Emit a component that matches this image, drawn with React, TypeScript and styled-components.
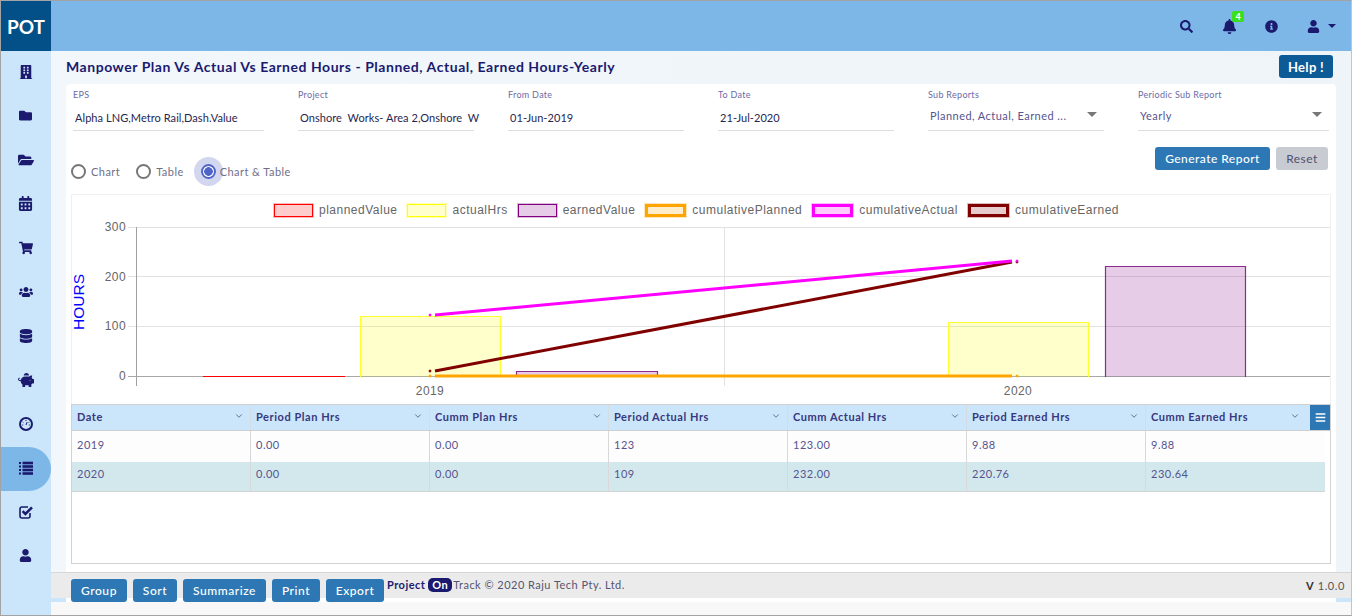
import React from 'react';
import styled, { createGlobalStyle } from 'styled-components';
import {
  FaBars,
  FaBell,
  FaBuilding,
  FaCalendarAlt,
  FaDatabase,
  FaFolder,
  FaFolderOpen,
  FaInfoCircle,
  FaPiggyBank,
  FaSearch,
  FaShoppingCart,
  FaUser,
  FaUsers,
} from 'react-icons/fa';
import { FiChevronDown } from 'react-icons/fi';

const NAVY = '#1b1a6e';
const SKY = '#7cb7e8';
const PALE = '#cbe6fa';
const BTN = '#2d78b4';

const GlobalStyle = createGlobalStyle`
  html, body { margin: 0; padding: 0; background: #fff; }
  body { font-family: Lato, "Liberation Sans", sans-serif; }
  * { box-sizing: border-box; }
`;

const Frame = styled.div`
  width: 1352px;
  height: 616px;
  display: flex;
  border: 1px solid #a3a3a3;
  border-right-color: #c4c4c4;
  overflow: hidden;
`;

const Sidebar = styled.nav`
  width: 50px;
  flex: none;
  background: ${PALE};
`;

const Brand = styled.div`
  height: 50px;
  background: #034f87;
  color: #fff;
  font-size: 19px;
  font-weight: 700;
  display: flex;
  align-items: center;
  justify-content: center;
`;

const NavItem = styled.div<{ $active?: boolean }>`
  height: 44px;
  display: flex;
  align-items: center;
  justify-content: center;
  padding: 0 1px 3px 0;
  color: ${NAVY};
  border-radius: 0 22px 22px 0;
  background: ${(p) => (p.$active ? SKY : 'transparent')};
`;

const Main = styled.div`
  flex: 1;
  min-width: 0;
  display: flex;
  flex-direction: column;
`;

const TopBar = styled.header`
  height: 50px;
  flex: none;
  background: ${SKY};
  display: flex;
  align-items: center;
  justify-content: flex-end;
  color: ${NAVY};
  padding-right: 15px;
`;

const TopIcon = styled.span<{ $gap: number }>`
  position: relative;
  display: flex;
  align-items: center;
  margin-left: ${(p) => p.$gap}px;
`;

const Badge = styled.span`
  position: absolute;
  top: -8px;
  left: 10px;
  width: 12px;
  height: 11px;
  background: #3be01c;
  color: #fff;
  border-radius: 2px;
  font-size: 9px;
  font-weight: 700;
  line-height: 11px;
  text-align: center;
`;

const Caret = styled.span`
  display: inline-block;
  width: 0;
  height: 0;
  margin-left: 8px;
  border-left: 4px solid transparent;
  border-right: 4px solid transparent;
  border-top: 4px solid ${NAVY};
`;

const Content = styled.div`
  height: 521px;
  flex: none;
  background: linear-gradient(90deg, #f1f7fb, #eef4f7);
  padding: 4px 15px 0;
  display: flex;
  flex-direction: column;
`;

const TitleRow = styled.div`
  height: 29px;
  flex: none;
  display: flex;
  justify-content: space-between;
  align-items: flex-start;
`;

const Title = styled.h1`
  margin: 4px 0 0;
  font-size: 14px;
  line-height: 16px;
  font-weight: 700;
  letter-spacing: 0.535px;
  color: ${NAVY};
`;

const HelpButton = styled.button`
  width: 54px;
  height: 23px;
  margin-right: 3px;
  border: 0;
  border-radius: 3px;
  background: #0c5a96;
  color: #fff;
  font: 700 13px Lato, sans-serif;
  letter-spacing: 0.3px;
  padding: 0;
`;

const Card = styled.section`
  flex: 1;
  min-height: 0;
  background: #fff;
  border-radius: 4px 4px 0 0;
  padding: 0 5px;
  display: flex;
  flex-direction: column;
`;

const Fields = styled.div`
  display: flex;
  height: 47px;
  margin-left: 2px;
  flex: none;
`;

const Field = styled.div<{ $w: number; $gap: number }>`
  width: ${(p) => p.$w}px;
  margin-right: ${(p) => p.$gap}px;
  flex: none;
  border-bottom: 1px solid #ddd;
  position: relative;
`;

const FieldLabel = styled.div`
  font-size: 9px;
  line-height: 11px;
  padding-top: 5px;
  letter-spacing: 0.3px;
  color: #6c6ba6;
`;

const FieldValue = styled.div<{ $select?: boolean }>`
  margin-top: ${(p) => (p.$select ? 9 : 11)}px;
  padding-left: 2px;
  font-size: 11px;
  line-height: 14px;
  letter-spacing: ${(p) => (p.$select ? 0.45 : 0.06)}px;
  color: ${(p) => (p.$select ? '#55548f' : '#27264f')};
  white-space: pre;
`;

const SelectCaret = styled.span`
  position: absolute;
  top: 28px;
  right: 7px;
  width: 0;
  height: 0;
  border-left: 5px solid transparent;
  border-right: 5px solid transparent;
  border-top: 5px solid #777;
`;

const ActionRow = styled.div`
  height: 63px;
  flex: none;
  display: flex;
  justify-content: space-between;
  align-items: flex-start;
`;

const Radios = styled.div`
  display: flex;
  align-items: center;
  height: 30px;
  margin-top: 25px;
`;

const Radio = styled.label<{ $gap: number }>`
  display: flex;
  align-items: center;
  font-size: 11px;
  letter-spacing: 0.45px;
  color: #6f6f8a;
  margin-right: ${(p) => p.$gap}px;
`;

const RadioMark = styled.span<{ $on?: boolean }>`
  width: 15px;
  height: 15px;
  margin-right: ${(p) => (p.$on ? 4 : 5)}px;
  border-radius: 50%;
  flex: none;
  border: 2px solid ${(p) => (p.$on ? '#4f63c9' : '#777')};
  background: ${(p) =>
    p.$on ? 'radial-gradient(circle, #4f63c9 0 4px, #fff 4.6px)' : '#fff'};
  box-shadow: ${(p) => (p.$on ? '0 0 0 7px #d2d6ef' : 'none')};
`;

const Actions = styled.div`
  display: flex;
  gap: 6px;
  margin: 16px 3px 0 0;
`;

const Btn = styled.button<{ $w: number; $muted?: boolean }>`
  width: ${(p) => p.$w}px;
  height: 23px;
  padding: 0;
  border: 0;
  border-radius: 3px;
  background: ${(p) => (p.$muted ? '#c8ccd2' : BTN)};
  color: ${(p) => (p.$muted ? '#50506e' : '#fff')};
  font: ${(p) => (p.$muted ? 400 : 500)} 12px Lato, sans-serif;
  letter-spacing: 0.45px;
  flex: none;
`;

const ChartBox = styled.div`
  height: 210px;
  flex: none;
  border: 1px solid #f0f0f0;
  border-bottom: 0;
`;

const Legend = styled.div`
  height: 25px;
  display: flex;
  align-items: flex-start;
  justify-content: center;
  padding: 8px 9px 0 0;
  gap: 10px;
  font: 12px/14px "Liberation Sans", Arial, sans-serif;
  letter-spacing: 0.5px;
  color: #666;
`;

const LegendItem = styled.div`
  display: flex;
  align-items: center;
  gap: 6px;
`;

const Swatch = styled.span<{ $fill: string; $line: string; $bold?: boolean }>`
  width: ${(p) => (p.$bold ? 41 : 39)}px;
  height: 13px;
  background: ${(p) => p.$fill};
  border: ${(p) => (p.$bold ? 3 : 1)}px solid ${(p) => p.$line};
  box-shadow: 0 0 0 1px ${(p) => p.$line}44;
`;

const Plot = styled.svg`
  display: block;
  width: 1258px;
  height: 183px;
  overflow: visible;
`;

const Grid = styled.div`
  height: 160px;
  flex: none;
  border: 1px solid #d2d2d2;
  position: relative;
`;

const HeadRow = styled.div`
  display: grid;
  grid-template-columns: repeat(7, 179px);
  height: 26px;
  background: ${PALE};
  border-bottom: 1px solid #d0d0d0;
  color: #38377f;
  font-size: 11px;
  font-weight: 700;
  letter-spacing: 0.55px;
`;

const HeadCell = styled.div`
  position: relative;
  display: flex;
  align-items: center;
  padding: 0 0 2px 5px;
  border-right: 1px solid #d4dde4;

  &:last-child {
    border-right: 0;
  }

  svg {
    position: absolute;
    top: 6px;
    right: 6px;
    font-size: 10px;
    color: #55548f;
  }
`;

const LastHeadCell = styled(HeadCell)`
  svg {
    right: 25px;
  }
`;

const MenuButton = styled.span`
  position: absolute;
  top: 0;
  right: 0;
  width: 20px;
  height: 25px;
  background: ${BTN};
  color: #fff;
  display: flex;
  align-items: center;
  justify-content: center;
  font-size: 11px;
`;

const BodyRow = styled.div<{ $alt?: boolean }>`
  display: grid;
  grid-template-columns: repeat(7, 179px);
  width: 1253px;
  height: ${(p) => (p.$alt ? 30 : 31)}px;
  background: ${(p) => (p.$alt ? '#d3e8ed' : '#fdfdfd')};
  border-bottom: ${(p) => (p.$alt ? '1px solid #cfd6d8' : '0')};
  color: #55548f;
  font-size: 11px;
  letter-spacing: 0.5px;
`;

const BodyCell = styled.div<{ $alt?: boolean }>`
  padding: ${(p) => (p.$alt ? 5 : 7)}px 0 0 5px;
  border-right: 1px solid #d8d8d8;

  &:last-child {
    border-right: 0;
  }
`;

const Footer = styled.footer`
  height: 26px;
  flex: none;
  position: relative;
  z-index: 1;
  background: #ebebeb;
  border-top: 1px solid #d6d6d6;
  display: flex;
  align-items: flex-start;
  padding: 6px 6px 0 20px;
`;

const FootButtons = styled.div`
  display: flex;
  gap: 6px;
`;

const FootButton = styled(Btn)`
  font-weight: 500;
  letter-spacing: 0.55px;
`;

const Copy = styled.div`
  margin: -1px 0 0 3px;
  font-size: 11px;
  line-height: 14px;
  letter-spacing: 0.47px;
  color: #55556f;
  display: flex;
  align-items: center;
  white-space: nowrap;
`;

const CopyBrand = styled.b`
  color: ${NAVY};
`;

const OnPill = styled.b`
  background: ${NAVY};
  color: #fff;
  border-radius: 5px;
  padding: 0 4px;
  margin: 0 1px 0 3px;
  line-height: 14px;
`;

const Version = styled.div`
  margin-left: auto;
  font-size: 11px;
  letter-spacing: 0.6px;
  color: #555;

  b {
    color: #333;
  }
`;

const Gutter = styled.div`
  height: 4px;
  flex: none;
  background: ${PALE};
  padding: 0 15px;

  &::before {
    content: '';
    display: block;
    height: 4px;
    background: #fff;
  }
`;

const Strip = styled.div`
  flex: 1;
  background: #f8f8f8;
`;

function GaugeIcon({ size }: { size: number }) {
  return (
    <svg width={size} height={size} viewBox="0 0 14 14" fill="none">
      <circle cx="7" cy="7" r="6" stroke="currentColor" strokeWidth="2" />
      <path
        d="M7 3v1M3.6 5l.8.5M10.4 5l-.8.5M3.2 8h1M9.8 8h1M7 8l1.2-3"
        stroke="currentColor"
        strokeWidth="1"
      />
    </svg>
  );
}

function ListIcon({ size }: { size: number }) {
  return (
    <svg width={size} height={size} viewBox="0 0 14 14" fill="currentColor">
      {[1, 4.5, 8, 11.5].map((y) => (
        <g key={y}>
          <rect x="0" y={y} width="2" height="2" />
          <rect x="3.5" y={y - 0.3} width="10.5" height="2.6" />
        </g>
      ))}
    </svg>
  );
}

function CheckIcon({ size }: { size: number }) {
  return (
    <svg width={size} height={size} viewBox="0 0 14 14" fill="none" stroke="currentColor">
      <path d="M11 8v3a2 2 0 0 1-2 2H3a2 2 0 0 1-2-2V4a2 2 0 0 1 2-2h6" strokeWidth="1.6" />
      <path d="M3.6 6.2 6.4 9 13 2.4" strokeWidth="2.6" />
    </svg>
  );
}

const navIcons = [
  { Icon: FaBuilding, size: 14 },
  { Icon: FaFolder, size: 13 },
  { Icon: FaFolderOpen, size: 16 },
  { Icon: FaCalendarAlt, size: 15 },
  { Icon: FaShoppingCart, size: 14 },
  { Icon: FaUsers, size: 14 },
  { Icon: FaDatabase, size: 14 },
  { Icon: FaPiggyBank, size: 16 },
  { Icon: GaugeIcon, size: 14 },
  { Icon: ListIcon, size: 14 },
  { Icon: CheckIcon, size: 14 },
  { Icon: FaUser, size: 13 },
];

const fields = [
  { label: 'EPS', value: 'Alpha LNG,Metro Rail,Dash.Value', w: 191, gap: 34 },
  { label: 'Project', value: 'Onshore  Works- Area 2,Onshore  W', w: 176, gap: 34 },
  { label: 'From Date', value: '01-Jun-2019', w: 176, gap: 34 },
  { label: 'To Date', value: '21-Jul-2020', w: 176, gap: 34 },
  { label: 'Sub Reports', value: 'Planned, Actual, Earned ...', w: 176, gap: 34, select: true },
  { label: 'Periodic Sub Report', value: 'Yearly', w: 191, gap: 0, select: true },
];

const legend = [
  { name: 'plannedValue', fill: 'rgba(255,0,0,0.2)', line: '#ff0000' },
  { name: 'actualHrs', fill: 'rgba(255,255,0,0.2)', line: '#ffff00' },
  { name: 'earnedValue', fill: 'rgba(128,0,128,0.2)', line: '#800080' },
  { name: 'cumulativePlanned', fill: 'rgba(255,165,0,0.2)', line: '#ffa500', bold: true },
  { name: 'cumulativeActual', fill: 'rgba(255,0,255,0.2)', line: '#ff00ff', bold: true },
  { name: 'cumulativeEarned', fill: 'rgba(128,0,0,0.2)', line: '#800000', bold: true },
];

const columns = [
  'Date',
  'Period Plan Hrs',
  'Cumm Plan Hrs',
  'Period Actual Hrs',
  'Cumm Actual Hrs',
  'Period Earned Hrs',
  'Cumm Earned Hrs',
];

const rows = [
  ['2019', '0.00', '0.00', '123', '123.00', '9.88', '9.88'],
  ['2020', '0.00', '0.00', '109', '232.00', '220.76', '230.64'],
];

// bars in plot coordinates: y 0 of the plot is 226px down the page, the value 0 sits at 150
const bars = [
  { x: 131, w: 141, top: 150, fill: 'rgba(255,0,0,0.2)', line: '#f00' },
  { x: 288, w: 140, top: 90, fill: 'rgba(255,255,0,0.2)', line: '#ffff30' },
  { x: 444, w: 141, top: 145, fill: 'rgba(128,0,128,0.2)', line: '#8c2a92' },
  { x: 719, w: 141, top: 150, fill: 'rgba(255,0,0,0.2)', line: '#f00' },
  { x: 876, w: 140, top: 96, fill: 'rgba(255,255,0,0.2)', line: '#ffff30' },
  { x: 1033, w: 140, top: 40, fill: 'rgba(128,0,128,0.2)', line: '#8c2a92' },
];

const lines = [
  { y1: 150, y2: 150, line: '#ffa500' },
  { y1: 145, y2: 36, line: '#800000' },
  { y1: 89, y2: 35, line: '#f0f' },
];

const Chart = () => (
  <Plot viewBox="0 -6 1258 183">
    {[1.5, 50.5, 100.5].map((y) => (
      <line key={y} x1="56" x2="1258" y1={y} y2={y} stroke="#e2e2e2" />
    ))}
    <line x1="652.5" x2="652.5" y1="1" y2="160" stroke="#e2e2e2" />
    <line x1="64.5" x2="64.5" y1="1" y2="160" stroke="#a0a0a0" />
    <line x1="56" x2="1258" y1="150.5" y2="150.5" stroke="#a8a8a8" />
    {bars.map((b) => (
      <g key={b.x}>
        <rect x={b.x} y={b.top} width={b.w} height={150.5 - b.top} fill={b.fill} />
        <path
          d={`M${b.x + 0.5} 151V${b.top + 0.5}H${b.x + b.w + 0.5}V151`}
          fill="none"
          stroke={b.line}
          strokeWidth="1.2"
        />
      </g>
    ))}
    {lines.map((l) => (
      <g key={l.line} stroke={l.line} fill={l.line}>
        <line x1="363" x2="940" y1={l.y1} y2={l.y2} strokeWidth="3" />
        <circle cx="358" cy={l.y1} r="1" strokeWidth="1" />
        <circle cx="945" cy={l.y2} r="1" strokeWidth="1" />
      </g>
    ))}
    <g fontFamily="Liberation Sans, Arial, sans-serif" fontSize="12" fill="#666" letterSpacing="0.4">
      {[
        ['300', 5],
        ['200', 55],
        ['100', 104],
        ['0', 154],
      ].map(([t, y]) => (
        <text key={t} x="54" y={y} textAnchor="end">
          {t}
        </text>
      ))}
      <text x="358" y="169" textAnchor="middle">2019</text>
      <text x="946" y="169" textAnchor="middle">2020</text>
    </g>
    <text
      transform="translate(12 76) rotate(-90)"
      textAnchor="middle"
      fontFamily="Liberation Sans, Arial, sans-serif"
      fontSize="15.5"
      fill="#00f"
    >
      HOURS
    </text>
  </Plot>
);

export default function App() {
  return (
    <>
      <GlobalStyle />
      <Frame>
        <Sidebar>
          <Brand>POT</Brand>
          {navIcons.map(({ Icon, size }, i) => (
            <NavItem key={i} $active={i === 9}>
              <Icon size={size} />
            </NavItem>
          ))}
        </Sidebar>
        <Main>
          <TopBar>
            <TopIcon $gap={0}>
              <FaSearch size={13} />
            </TopIcon>
            <TopIcon $gap={29}>
              <FaBell size={15} />
              <Badge>4</Badge>
            </TopIcon>
            <TopIcon $gap={28}>
              <FaInfoCircle size={13} />
            </TopIcon>
            <TopIcon $gap={29}>
              <FaUser size={13} />
              <Caret />
            </TopIcon>
          </TopBar>
          <Content>
            <TitleRow>
              <Title>Manpower Plan Vs Actual Vs Earned Hours - Planned, Actual, Earned Hours-Yearly</Title>
              <HelpButton>Help !</HelpButton>
            </TitleRow>
            <Card>
              <Fields>
                {fields.map((f) => (
                  <Field key={f.label} $w={f.w} $gap={f.gap}>
                    <FieldLabel>{f.label}</FieldLabel>
                    <FieldValue $select={f.select}>{f.value}</FieldValue>
                    {f.select && <SelectCaret />}
                  </Field>
                ))}
              </Fields>
              <ActionRow>
                <Radios>
                  <Radio $gap={16}>
                    <RadioMark />
                    Chart
                  </Radio>
                  <Radio $gap={17}>
                    <RadioMark />
                    Table
                  </Radio>
                  <Radio $gap={0}>
                    <RadioMark $on />
                    Chart &amp; Table
                  </Radio>
                </Radios>
                <Actions>
                  <Btn $w={115}>Generate Report</Btn>
                  <Btn $w={52} $muted>
                    Reset
                  </Btn>
                </Actions>
              </ActionRow>
              <ChartBox>
                <Legend>
                  {legend.map((l) => (
                    <LegendItem key={l.name}>
                      <Swatch $fill={l.fill} $line={l.line} $bold={l.bold} />
                      {l.name}
                    </LegendItem>
                  ))}
                </Legend>
                <Chart />
              </ChartBox>
              <Grid>
                <HeadRow>
                  {columns.map((c, i) =>
                    i === columns.length - 1 ? (
                      <LastHeadCell key={c}>
                        {c}
                        <FiChevronDown />
                      </LastHeadCell>
                    ) : (
                      <HeadCell key={c}>
                        {c}
                        <FiChevronDown />
                      </HeadCell>
                    ),
                  )}
                </HeadRow>
                <MenuButton>
                  <FaBars />
                </MenuButton>
                {rows.map((r, i) => (
                  <BodyRow key={r[0]} $alt={i === 1}>
                    {r.map((v, j) => (
                      <BodyCell key={j} $alt={i === 1}>
                        {v}
                      </BodyCell>
                    ))}
                  </BodyRow>
                ))}
              </Grid>
            </Card>
          </Content>
          <Footer>
            <FootButtons>
              <FootButton $w={56}>Group</FootButton>
              <FootButton $w={44}>Sort</FootButton>
              <FootButton $w={83}>Summarize</FootButton>
              <FootButton $w={48}>Print</FootButton>
              <FootButton $w={58}>Export</FootButton>
            </FootButtons>
            <Copy>
              <CopyBrand>Project</CopyBrand>
              <OnPill>On</OnPill>
              Track © 2020 Raju Tech Pty. Ltd.
            </Copy>
            <Version>
              <b>V</b> 1.0.0
            </Version>
          </Footer>
          <Gutter />
          <Strip />
        </Main>
      </Frame>
    </>
  );
}
